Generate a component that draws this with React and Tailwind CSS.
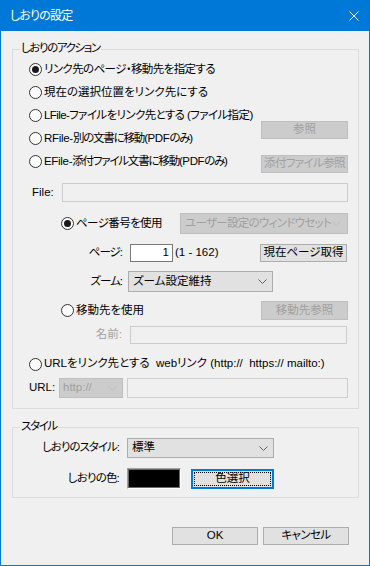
import React from "react";

function Radio({ checked }) {
  return (
    <span className="flex h-[13px] w-[13px] shrink-0 items-center justify-center rounded-full border border-[#333333] bg-white">
      {checked && <span className="h-[7px] w-[7px] rounded-full bg-[#1a1a1a]" />}
    </span>
  );
}

function Chevron({ color }) {
  return (
    <svg width="9" height="5" viewBox="0 0 9 5" className="shrink-0">
      <path d="M0.5 0.5 L4.5 4.5 L8.5 0.5" fill="none" stroke={color} strokeWidth="1" />
    </svg>
  );
}

function Group({ label, children, className }) {
  return (
    <div className={"relative border border-[#dcdcdc] " + className}>
      <span className="absolute left-[7px] top-[-10px] bg-[#f0f0f0] px-[1px] leading-[16px] tracking-[-1.4px]">{label}</span>
      {children}
    </div>
  );
}

export default function App() {
  return (
    <div className="flex h-[566px] w-[370px] flex-col border-x border-b border-[#0078d7] bg-[#f0f0f0] font-['Liberation_Sans','Noto_Sans_CJK_JP',sans-serif] text-[11.5px] leading-none text-black [font-feature-settings:'palt']">
      {/* title bar */}
      <div className="flex h-[31px] shrink-0 items-center justify-between bg-[#0078d7] pl-[9px] pr-[10px] text-white">
        <span className="text-[12px] tracking-[-0.8px]">しおりの設定</span>
        <svg width="10" height="10" viewBox="0 0 10 10">
          <path d="M0.5 0.5 L9.5 9.5 M9.5 0.5 L0.5 9.5" stroke="white" strokeWidth="1" />
        </svg>
      </div>

      <div className="flex flex-col pl-[11px] pr-[10px]">
        <Group label="しおりのアクション" className="mt-[18px] pb-[10px] pt-[8px]">
          {/* radios with right buttons */}
          <div className="flex">
            <div className="flex w-[248px] flex-col pl-[16px]">
              <div className="flex h-[23px] items-center gap-[2px]"><Radio checked /><span className="whitespace-nowrap tracking-[-0.6px]">リンク先のページ・移動先を指定する</span></div>
              <div className="flex h-[23px] items-center gap-[2px]"><Radio /><span className="whitespace-nowrap">現在の選択位置をリンク先にする</span></div>
              <div className="flex h-[23px] items-center gap-[2px]"><Radio /><span className="whitespace-pre tracking-[-0.6px]">LFile-ファイルをリンク先とする (ファイル指定)</span></div>
              <div className="flex h-[23px] items-center gap-[2px]"><Radio /><span className="whitespace-nowrap"><span className="tracking-[-0.3px]">RFile-</span><span className="tracking-[-1.2px]">別の文書に移動</span><span className="tracking-[-0.4px]">(PDF</span><span className="tracking-[-1.2px]">のみ</span>)</span></div>
              <div className="flex h-[23px] items-center gap-[2px]"><Radio /><span className="whitespace-nowrap"><span className="tracking-[-0.3px]">EFile-</span><span className="tracking-[-1.2px]">添付ファイル文書に移動</span><span className="tracking-[-0.4px]">(PDF</span><span className="tracking-[-1.2px]">のみ</span>)</span></div>
            </div>
            <div className="flex flex-col">
              <div className="mt-[63px] flex h-[18px] w-[87px] items-center justify-center whitespace-nowrap border border-[#bfbfbf] bg-[#cccccc] text-[#a0a0a0]">参照</div>
              <div className="mt-[16px] flex h-[18px] w-[87px] items-center justify-center whitespace-nowrap border border-[#bfbfbf] bg-[#cccccc] tracking-[-0.6px] text-[#a0a0a0]">添付ファイル参照</div>
            </div>
          </div>

          {/* File */}
          <div className="mt-[10px] flex h-[19px] items-center pl-[19px]">
            <span className="w-[30px]">File:</span>
            <div className="h-[19px] w-[286px] border border-[#cccccc] bg-[#f0f0f0]" />
          </div>

          {/* page number */}
          <div className="mt-[11px] flex h-[21px] items-center pl-[48px]">
            <div className="flex w-[119px] items-center gap-[2px]"><Radio checked /><span className="whitespace-nowrap tracking-[-0.6px]">ページ番号を使用</span></div>
            <div className="flex h-[21px] w-[168px] items-center justify-between border border-[#bfbfbf] bg-[#cccccc] pl-[4px] pr-[6px] text-[#a0a0a0]">
              <span className="whitespace-nowrap tracking-[-0.7px]">ユーザー設定のウィンドウセット</span>
              <Chevron color="#bfbfbf" />
            </div>
          </div>

          {/* page input */}
          <div className="mt-[10px] flex h-[18px] items-center">
            <span className="w-[110px] pr-[1px] text-right tracking-[-1px]">ページ:</span>
            <div className="ml-[7px] flex h-[18px] w-[43px] items-center justify-end border border-[#7a7a7a] bg-white pr-[3px]">1</div>
            <span className="ml-[2px] w-[85px] whitespace-pre">(1 - 162)</span>
            <div className="flex h-[18px] w-[87px] items-center justify-center whitespace-nowrap border border-[#adadad] bg-[#e1e1e1]">現在ページ取得</div>
          </div>

          {/* zoom */}
          <div className="mt-[9px] flex h-[21px] items-center">
            <span className="w-[110px] pr-[1px] text-right tracking-[-1px]">ズーム:</span>
            <div className="ml-[5px] flex h-[21px] w-[145px] items-center justify-between border border-[#acacac] bg-[#e1e1e1] pl-[4px] pr-[5px]">
              <span>ズーム設定維持</span>
              <Chevron color="#606060" />
            </div>
          </div>

          {/* destination */}
          <div className="mt-[9px] flex h-[19px] items-center pl-[48px]">
            <div className="flex w-[200px] items-center gap-[2px]"><Radio /><span>移動先を使用</span></div>
            <div className="flex h-[19px] w-[87px] items-center justify-center whitespace-nowrap border border-[#bfbfbf] bg-[#cccccc] text-[#a0a0a0]">移動先参照</div>
          </div>

          {/* name */}
          <div className="mt-[6px] flex h-[18px] items-center">
            <span className="w-[110px] pr-[1px] text-right text-[#a0a0a0]">名前:</span>
            <div className="ml-[7px] h-[18px] w-[217px] border border-[#cccccc] bg-[#f0f0f0]" />
          </div>

          {/* url radio */}
          <div className="mt-[10px] flex h-[20px] items-center gap-[2px] pl-[16px]">
            <Radio />
            <span className="whitespace-pre">URLをリンク先とする  webリンク (http://  https:// mailto:)</span>
          </div>

          {/* url */}
          <div className="mt-[4px] flex h-[20px] items-center pl-[16px]">
            <span className="w-[30px]">URL:</span>
            <div className="flex h-[20px] w-[64px] items-center justify-between border border-[#bfbfbf] bg-[#cccccc] pl-[3px] pr-[5px] text-[#a0a0a0]">
              <span>http://</span>
              <Chevron color="#bfbfbf" />
            </div>
            <div className="ml-[4px] h-[20px] w-[221px] border border-[#cccccc] bg-[#f0f0f0]" />
          </div>
        </Group>

        <Group label="スタイル" className="mt-[18px] pb-[8px] pt-[10px]">
          <div className="flex h-[20px] items-center">
            <span className="w-[106px] whitespace-nowrap text-right tracking-[-1px]">しおりのスタイル:</span>
            <div className="ml-[8px] flex h-[20px] w-[147px] items-center justify-between border border-[#acacac] bg-[#e1e1e1] pl-[4px] pr-[5px]">
              <span>標準</span>
              <Chevron color="#606060" />
            </div>
          </div>
          <div className="mt-[10px] flex h-[21px] items-center">
            <span className="w-[106px] text-right tracking-[-0.8px]">しおりの色:</span>
            <div className="ml-[8px] h-[21px] w-[54px] border border-b-white border-l-[#a0a0a0] border-r-white border-t-[#a0a0a0]">
              <div className="h-full w-full border border-[#696969] bg-black" />
            </div>
            <div className="ml-[10px] flex h-[20px] w-[83px] border-2 border-[#0078d7] bg-[#e1e1e1] p-[1px]">
              <div className="flex flex-1 items-center justify-center border border-dotted border-black">色選択</div>
            </div>
          </div>
        </Group>

        <div className="mt-[29px] flex justify-end gap-[5px] pr-[10px]">
          <div className="flex h-[18px] w-[86px] items-center justify-center border border-[#adadad] bg-[#e1e1e1]">OK</div>
          <div className="flex h-[18px] w-[86px] items-center justify-center border border-[#adadad] bg-[#e1e1e1] tracking-[-0.6px]">キャンセル</div>
        </div>
      </div>
    </div>
  );
}
